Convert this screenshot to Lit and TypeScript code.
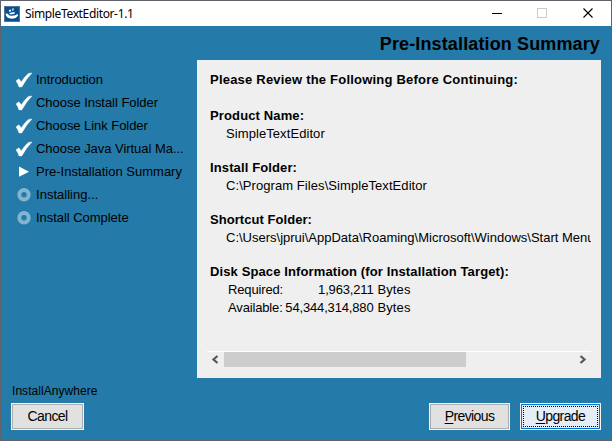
import { LitElement, html, css, svg } from "lit";
import { customElement } from "lit/decorators.js";

type StepState = "done" | "current" | "pending";

interface Step {
  label: string;
  state: StepState;
  spacing: number;
}

const steps: Step[] = [
  { label: "Introduction", state: "done", spacing: -0.09 },
  { label: "Choose Install Folder", state: "done", spacing: -0.04 },
  { label: "Choose Link Folder", state: "done", spacing: -0.05 },
  { label: "Choose Java Virtual Ma...", state: "done", spacing: -0.04 },
  { label: "Pre-Installation Summary", state: "current", spacing: 0 },
  { label: "Installing...", state: "pending", spacing: 0.02 },
  { label: "Install Complete", state: "pending", spacing: -0.04 },
];

const sections = [
  { name: "Product Name:", value: "SimpleTextEditor", ns: 0.13, vs: 0.08 },
  { name: "Install Folder:", value: "C:\\Program Files\\SimpleTextEditor", ns: 0.12, vs: 0.07 },
  {
    name: "Shortcut Folder:",
    value: "C:\\Users\\jprui\\AppData\\Roaming\\Microsoft\\Windows\\Start Menu\\Programs",
    ns: 0.05,
    vs: 0,
  },
];

const glyphs = {
  done: svg`<path d="M1 8.9 L3.4 7 L4.6 7.6 L6.2 10 Q9.4 4.6 13.4 1.4 L17 1 Q11.4 6.6 6.8 14.9 L4 14.9 Q3 11.4 1 8.9Z" fill="#fff" stroke="#fff" stroke-width=".4"/>`,
  current: svg`<path d="M4 2.6 L14 7.7 L4 12.8Z" fill="#fff"/>`,
  pending: svg`<circle cx="9" cy="7.8" r="4.7" fill="none" stroke="#83b4ce" stroke-width="4"/>`,
};

@customElement("app-root")
export class AppRoot extends LitElement {
  static styles = css`
    :host {
      display: flex;
      flex-direction: column;
      box-sizing: border-box;
      width: 612px;
      height: 441px;
      border: 1px solid #62626a;
      background: #247aa8;
      font: 13px/18px "Liberation Sans", Arial, sans-serif;
      color: #000;
      white-space: nowrap;
      overflow: hidden;
    }
    .titlebar {
      height: 25px;
      flex: none;
      background: #fff;
      display: flex;
      align-items: center;
      padding-left: 3px;
      font: 12px/24px "Noto Sans", sans-serif;
    }
    .titlebar svg { display: block; flex: none; }
    .caption { margin-left: 5px; flex: 1; letter-spacing: -0.36px; }
    .heading {
      height: 34px;
      flex: none;
      padding-right: 11px;
      text-align: right;
      font-size: 18px;
      font-weight: bold;
      line-height: 36px;
      letter-spacing: 0.13px;
    }
    .main { display: flex; height: 318px; flex: none; }
    .steps { width: 196px; flex: none; padding-top: 8px; box-sizing: border-box; }
    .step { display: flex; align-items: center; height: 23px; padding-left: 14px; }
    .step svg { flex: none; margin-right: 4px; }
    .panel {
      width: 404px;
      box-sizing: border-box;
      background: #efefef;
      padding: 11px 10px 0;
      display: flex;
      flex-direction: column;
    }
    .summary { flex: 1; padding-left: 3px; overflow: hidden; }
    .bold { font-weight: bold; }
    .intro { letter-spacing: 0.21px; }
    .section { margin-top: 16px; }
    .intro + .section { margin-top: 18px; }
    .value { padding-left: 16px; }
    .disk { letter-spacing: 0.12px; }
    .sizes { display: grid; grid-template-columns: 54px 91.5px auto; padding-left: 18px; }
    .name { letter-spacing: -0.15px; }
    .amount { text-align: right; letter-spacing: -0.16px; }
    .unit { padding-left: 4px; letter-spacing: 0.1px; }
    .scroll {
      display: flex;
      height: 16px;
      margin-bottom: 10px;
      border-top: 1px solid #fff;
      align-items: flex-start;
    }
    .scroll svg { display: block; flex: none; }
    .track { flex: 1; height: 15px; }
    .thumb { width: 242px; height: 15px; background: #cdcdcd; }
    .brand { height: 25px; flex: none; padding-left: 11px; font-size: 12px; line-height: 27px; letter-spacing: 0.05px; }
    .actions { display: flex; padding: 0 10px; height: 27px; }
    .grow { flex: 1; }
    .button {
      width: 81px;
      height: 27px;
      box-sizing: border-box;
      border: 1px solid #f4f4f4;
      background: #e1e1e1;
      box-shadow: inset 0 0 0 1px #adadad;
      padding: 0;
      text-align: center;
      font: 14px/25px "Liberation Sans", Arial, sans-serif;
      letter-spacing: -0.6px;
      color: #000;
    }
    .button.cancel { width: 73px; }
    .button.primary {
      margin-left: 10px;
      background: #e5edf7;
      box-shadow: inset 0 0 0 1px #0078d7;
      padding: 2px;
    }
    .focus { display: block; height: 21px; box-sizing: border-box; border: 1px dotted #000; line-height: 19px; }
    .key { text-decoration: underline; text-underline-offset: 2px; text-decoration-thickness: 1px; text-decoration-skip-ink: none; }
  `;

  render() {
    return html`
      <div class="titlebar">
        <svg width="16" height="16" viewBox="0 0 16 16">
          <rect x=".5" y=".5" width="15" height="15" fill="#064f91" stroke="#54759a" />
          <path d="M1.4 7.6 L4 7.8 Q4.4 9.8 8 9.8 Q11.6 9.8 13.4 8 L14.2 9.2 Q12.4 12.8 7.6 12.8 Q2.4 12.8 1.4 7.6Z" fill="#fff" />
          <path d="M5.2 8 Q5.6 6.6 7.3 6.4 L10.6 6 L10.8 7.4 L7.2 8.6Z M4.8 4 L7 3.6 L7 5.4 L5 5.7Z M8.2 2.6 L9.5 2.2 L9.6 4.4 L8.3 4.8Z" fill="#fff" />
        </svg>
        <span class="caption">SimpleTextEditor-1.1</span>
        <svg width="138" height="25" viewBox="0 0 138 25" fill="none" shape-rendering="crispEdges">
          <path d="M19 12.5H29" stroke="#000" />
          <rect x="64.5" y="7.5" width="9" height="9" stroke="#ccc" />
          <path d="M110.5 7.5L119.5 16.5M119.5 7.5L110.5 16.5" stroke="#000" stroke-width="1.1" shape-rendering="auto" />
        </svg>
      </div>
      <div class="heading">Pre-Installation Summary</div>
      <div class="main">
        <div class="steps">
          ${steps.map(
            (s) => html`<div class="step"><svg width="17" height="16" viewBox="0 0 17 16">${glyphs[s.state]}</svg><span style="letter-spacing:${s.spacing}px">${s.label}</span></div>`
          )}
        </div>
        <div class="panel">
          <div class="summary">
            <div class="bold intro">Please Review the Following Before Continuing:</div>
            ${sections.map(
              (s) => html`<div class="section"><div class="bold" style="letter-spacing:${s.ns}px">${s.name}</div><div class="value" style="letter-spacing:${s.vs}px">${s.value}</div></div>`
            )}
            <div class="section">
              <div class="bold disk">Disk Space Information (for Installation Target):</div>
              <div class="sizes">
                <span class="name">Required:</span><span class="amount">1,963,211</span><span class="unit">Bytes</span>
                <span class="name">Available:</span><span class="amount">54,344,314,880</span><span class="unit">Bytes</span>
              </div>
            </div>
          </div>
          <div class="scroll">
            <svg width="17" height="15" viewBox="0 0 17 15" fill="none" stroke="#555" stroke-width="2.2"><path d="M10.5 4L6.5 7.5L10.5 11" /></svg>
            <div class="track"><div class="thumb"></div></div>
            <svg width="17" height="15" viewBox="0 0 17 15" fill="none" stroke="#555" stroke-width="2.2"><path d="M6.5 4L10.5 7.5L6.5 11" /></svg>
          </div>
        </div>
      </div>
      <div class="brand">InstallAnywhere</div>
      <div class="actions">
        <button class="button cancel">Cancel</button>
        <span class="grow"></span>
        <button class="button"><span class="key">P</span>revious</button>
        <button class="button primary"><span class="focus"><span class="key">U</span>pgrade</span></button>
      </div>
    `;
  }
}
